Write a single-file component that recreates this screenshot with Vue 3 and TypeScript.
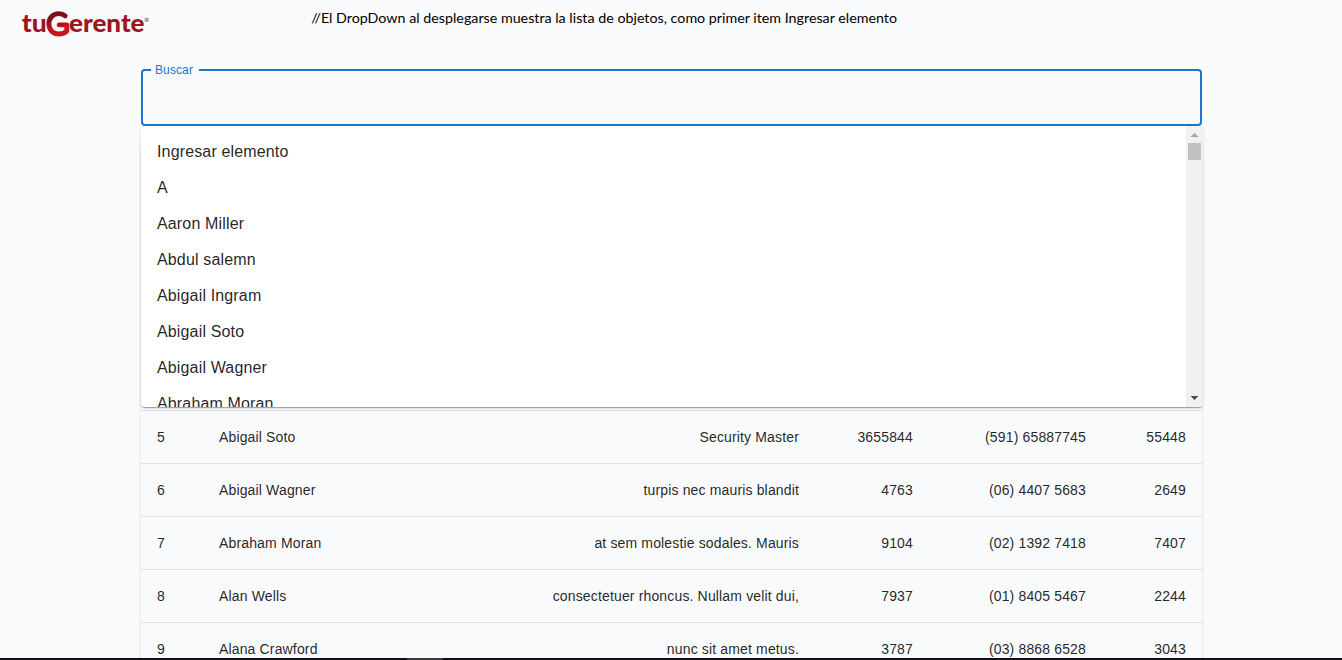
<script setup lang="ts">
interface Row {
  id: number
  name: string
  note: string
  nit: string
  phone: string
  code: string
}

const options: string[] = [
  'Ingresar elemento',
  'A',
  'Aaron Miller',
  'Abdul salemn',
  'Abigail Ingram',
  'Abigail Soto',
  'Abigail Wagner',
  'Abraham Moran',
]

const rows: Row[] = [
  { id: 5, name: 'Abigail Soto', note: 'Security Master', nit: '3655844', phone: '(591) 65887745', code: '55448' },
  { id: 6, name: 'Abigail Wagner', note: 'turpis nec mauris blandit', nit: '4763', phone: '(06) 4407 5683', code: '2649' },
  { id: 7, name: 'Abraham Moran', note: 'at sem molestie sodales. Mauris', nit: '9104', phone: '(02) 1392 7418', code: '7407' },
  { id: 8, name: 'Alan Wells', note: 'consectetuer rhoncus. Nullam velit dui,', nit: '7937', phone: '(01) 8405 5467', code: '2244' },
  { id: 9, name: 'Alana Crawford', note: 'nunc sit amet metus.', nit: '3787', phone: '(03) 8868 6528', code: '3043' },
]
</script>

<template>
  <div class="page">
    <header class="header">
      <svg class="logo" width="160" height="44" viewBox="0 0 160 44" role="img" aria-label="tuGerente">
        <defs>
          <linearGradient id="g-fill" x1="0" y1="0" x2="0.25" y2="1">
            <stop offset="0.3" stop-color="#7d1018" />
            <stop offset="0.55" stop-color="#a3121b" />
            <stop offset="0.8" stop-color="#cb151e" />
          </linearGradient>
        </defs>
        <g class="word">
          <text x="21.8" y="31.8" textLength="25" lengthAdjust="spacingAndGlyphs">tu</text>
          <text x="69" y="31.8" textLength="75.5" lengthAdjust="spacingAndGlyphs">erente</text>
        </g>
        <path
          d="M65.2 15.8C63.4 14.2 61.3 13.6 58.8 13.6C53 13.6 48.9 18 48.9 23.8C48.9 29.9 53 34 58.8 34C62 34 65 32.9 66.8 31V24.9H59.2"
          fill="none" stroke="url(#g-fill)" stroke-width="4.9" stroke-linecap="round" stroke-linejoin="round"
        />
        <circle cx="146.6" cy="19.8" r="2.2" fill="#9b9b9b" />
        <circle cx="146.2" cy="19.5" r="0.8" fill="#d5d5d5" />
      </svg>
      <svg class="note" width="600" height="32" viewBox="0 0 600 32">
        <text x="-0.8" y="23" textLength="585.8" lengthAdjust="spacingAndGlyphs">//El DropDown al desplegarse muestra la lista de objetos, como primer item Ingresar elemento</text>
      </svg>
    </header>

    <main class="content">
      <div class="search">
        <span class="search-label">Buscar</span>
        <div class="dropdown">
          <ul class="options">
            <li v-for="option in options" :key="option">{{ option }}</li>
          </ul>
          <div class="scrollbar">
            <svg width="17" height="17" viewBox="0 0 17 17"><path d="M5 11h7v-1h-1V9h-1V8H9V7H8v1H7v1H6v1H5z" fill="#a3a3a3" /></svg>
            <div class="thumb"></div>
            <svg class="down" width="17" height="17" viewBox="0 0 17 17"><path d="M5 6h7v1h-1v1h-1v1H9v1H8V9H7V8H6V7H5z" fill="#505050" /></svg>
          </div>
        </div>
      </div>

      <div class="table">
        <div v-for="row in rows" :key="row.id" class="row">
          <span>{{ row.id }}</span>
          <span>{{ row.name }}</span>
          <span class="right">{{ row.note }}</span>
          <span class="right">{{ row.nit }}</span>
          <span class="right">{{ row.phone }}</span>
          <span class="right">{{ row.code }}</span>
        </div>
      </div>
    </main>

    <div class="taskbar"><div class="taskbar-active"></div></div>
  </div>
</template>

<style>
body {
  margin: 0;
  background: #f9fafc;
}
</style>

<style scoped>
.page {
  position: relative;
  height: 660px;
  overflow: hidden;
  background: #f9fafc;
  color: rgba(0, 0, 0, 0.87);
  font-family: "Liberation Sans", Arial, sans-serif;
}

.header {
  display: flex;
  height: 69px;
}

.logo,
.note {
  display: block;
  flex: none;
  overflow: visible;
}

.note {
  margin-left: 152px;
  font: 14px Lato, sans-serif;
  fill: #000;
}

.word {
  font-family: Lato, sans-serif;
  font-size: 25px;
  font-weight: 900;
  fill: #9c161d;
}

.content {
  width: 1062px;
  margin-left: 141px;
}

.search {
  position: relative;
  box-sizing: border-box;
  width: 1061px;
  height: 57px;
  border: 2px solid #1976d2;
  border-radius: 4px;
}

.search-label {
  position: absolute;
  top: -8px;
  left: 8px;
  box-sizing: border-box;
  width: 48px;
  padding-left: 4px;
  background: #f9fafc;
  color: #1976d2;
  font-size: 12px;
  line-height: 14px;
  letter-spacing: 0.11px;
}

.dropdown {
  position: absolute;
  z-index: 2;
  top: 55px;
  left: -2px;
  display: flex;
  width: 1062px;
  height: 281px;
  overflow: hidden;
  border-radius: 4px;
  background: #fff;
  box-shadow:
    0 2px 1px -1px rgba(0, 0, 0, 0.2),
    0 1px 1px 0 rgba(0, 0, 0, 0.14),
    0 1px 3px 0 rgba(0, 0, 0, 0.12);
}

.options {
  flex: 1;
  margin: 0;
  padding: 8px 0;
  list-style: none;
}

.options li {
  height: 36px;
  padding-left: 16px;
  font-size: 16px;
  line-height: 35px;
  letter-spacing: 0.15px;
}

.scrollbar {
  display: flex;
  flex-direction: column;
  width: 17px;
  background: #f1f1f1;
}

.scrollbar svg {
  display: block;
}

.thumb {
  width: 13px;
  height: 17px;
  margin-left: 2px;
  background: #c1c1c1;
}

.down {
  margin-top: auto;
}

.table {
  width: 1061px;
  height: 520px;
  box-sizing: border-box;
  padding-top: 267px;
  margin-top: 17px;
  border-radius: 4px;
  box-shadow:
    0 2px 1px -1px rgba(0, 0, 0, 0.2),
    0 1px 1px 0 rgba(0, 0, 0, 0.14),
    0 1px 3px 0 rgba(0, 0, 0, 0.12);
}

.row {
  display: grid;
  grid-template-columns: 62px 200px 380px 114px 173px 100px;
  box-sizing: border-box;
  height: 53px;
  padding: 0 16px;
  border-top: 1px solid #e0e0e0;
  font-size: 14px;
  line-height: 53px;
  letter-spacing: 0.15px;
  white-space: nowrap;
}

.right {
  text-align: right;
}

.taskbar {
  position: absolute;
  z-index: 3;
  right: 0;
  bottom: 0;
  left: 0;
  height: 2px;
  background: #101014;
}

.taskbar-active {
  width: 36px;
  height: 2px;
  margin-left: 407px;
  background: #3b3b3e;
}
</style>
